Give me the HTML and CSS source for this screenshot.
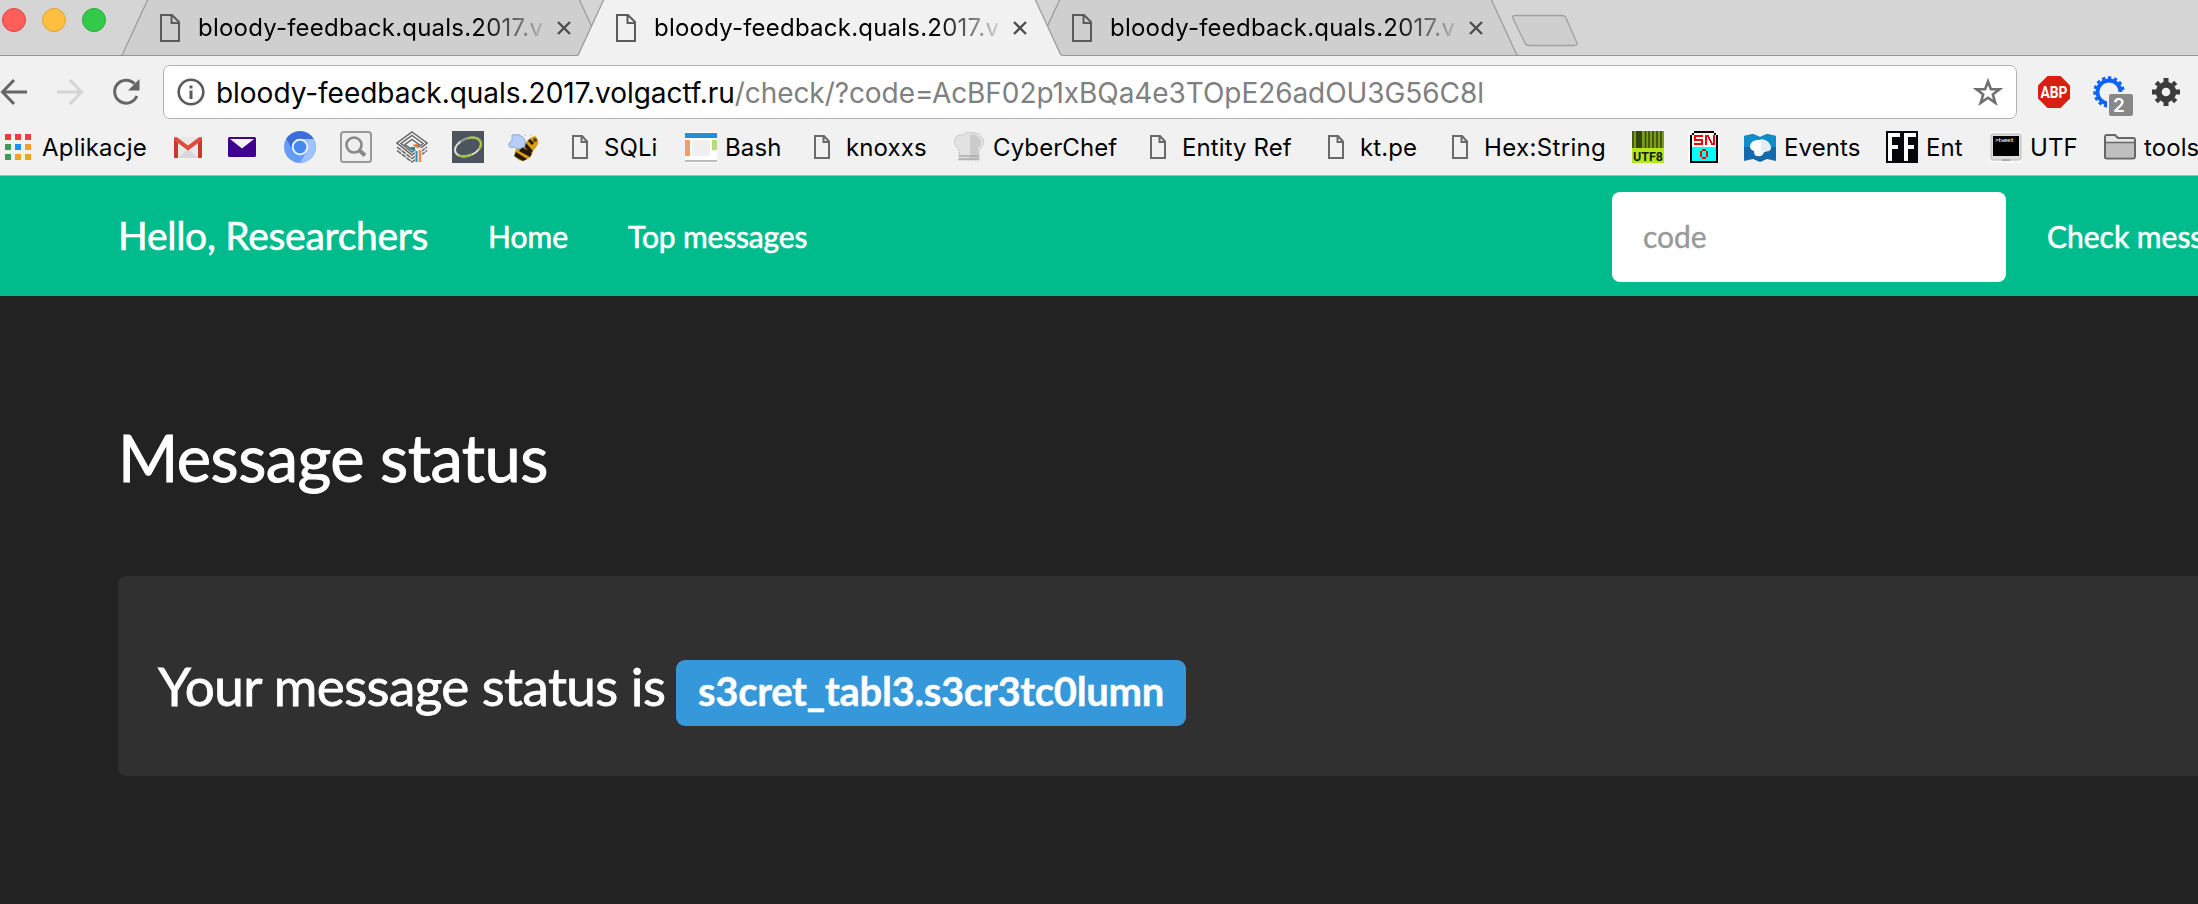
FILE: index.html
```
<!DOCTYPE html>
<html lang="pl">
<head>
<meta charset="utf-8">
<title>Message status</title>
<link rel="stylesheet" href="styles.css">
</head>
<body>
<svg class="defs" width="0" height="0">
  <symbol id="doc" viewBox="0 0 20 28"><path d="M1 1H12L19 8V27H1Z M11.500 1V9H19" fill="none" stroke="currentColor" stroke-width="2"/></symbol>
  <symbol id="doc-sm" viewBox="0 0 16 24"><path d="M1 1H10L15 6.500V23H1Z M9.500 1V7H15" fill="none" stroke="currentColor" stroke-width="2"/></symbol>
  <symbol id="close" viewBox="0 0 14 14"><path d="M1 1L13 13M13 1L1 13" fill="none" stroke="#4d4d4d" stroke-width="2.300"/></symbol>
  <symbol id="tab-shape" viewBox="0 0 486 56"><path d="M0 56Q2 55 3 52L25 4Q26 0 28 -1H457Q459 0 460 3L482 52Q483 55 486 56Z" fill="currentColor"/><path d="M0.500 55.500Q2 54 3 51L27 -1M458 -1L482 51Q483 54 485 55.500" fill="none" stroke="#999" stroke-width="1.200"/></symbol>
</svg>
<div class="browser">
  <header class="tabstrip">
    <div class="lights"><i class="red"></i><i class="yellow"></i><i class="green"></i></div>
    <div class="tab"><svg class="shape"><use href="#tab-shape"/></svg><svg class="fav"><use href="#doc"/></svg><span class="tab-title">bloody-feedback.quals.2017.v</span><svg class="x"><use href="#close"/></svg></div>
    <div class="tab active"><svg class="shape"><use href="#tab-shape"/></svg><svg class="fav"><use href="#doc"/></svg><span class="tab-title">bloody-feedback.quals.2017.v</span><svg class="x"><use href="#close"/></svg></div>
    <div class="tab"><svg class="shape"><use href="#tab-shape"/></svg><svg class="fav"><use href="#doc"/></svg><span class="tab-title">bloody-feedback.quals.2017.v</span><svg class="x"><use href="#close"/></svg></div>
    <svg class="newtab" viewBox="0 0 68 34"><path d="M4 1.500H51Q54 1.500 55 4L65.500 28Q67 31.500 63 31.500H18Q15 31.500 14 29L2 4.500Q1 1.500 4 1.500Z" fill="#cfcfcf" stroke="#a0a0a0" stroke-width="1.300"/></svg>
  </header>
  <div class="toolbar">
    <svg class="back" viewBox="0 0 28 28"><path d="M27 14H3M14 2L2.500 14L14 26" fill="none" stroke="#666" stroke-width="3"/></svg>
    <svg class="forward" viewBox="0 0 28 28"><path d="M1 14H25M14 2L25.500 14L14 26" fill="none" stroke="#d4d4d4" stroke-width="3"/></svg>
    <svg class="reload" viewBox="0 0 28 28"><path d="M22.500 5.800A11.500 11.500 0 1 0 24.800 18" fill="none" stroke="#666" stroke-width="3"/><path d="M27.500 1V12.500H16Z" fill="#666"/></svg>
    <div class="omnibox">
      <svg class="info" viewBox="0 0 28 28"><circle cx="14" cy="14" r="12.300" fill="none" stroke="#5a5a5a" stroke-width="2.600"/><path d="M12.500 7.500h3v3h-3zM12.500 12.500h3v8.500h-3z" fill="#5a5a5a"/></svg>
      <span class="url">bloody-feedback.quals.2017.volgactf.ru<span class="path">/check/?code=AcBF02p1xBQa4e3TOpE26adOU3G56C8l</span></span>
      <svg class="star" viewBox="0 0 30 30"><path d="M15 4.500L17.900 12.300H26.500L19.800 17.400L22.300 25.800L15 20.800L7.700 25.800L10.200 17.400L3.500 12.300H12.100Z" fill="none" stroke="#707070" stroke-width="2.600"/></svg>
    </div>
    <svg class="abp" viewBox="0 0 32 32"><path d="M9.500 0H22.500L32 9.500V22.500L22.500 32H9.500L0 22.500V9.500Z" fill="#d91f12"/><text x="16" y="21.500" text-anchor="middle" textLength="27" lengthAdjust="spacingAndGlyphs">ABP</text></svg>
    <div class="ext"><svg viewBox="0 0 32 32"><circle cx="16" cy="16" r="11.500" fill="none" stroke="#0d63f8" stroke-width="3.800"/><circle cx="16" cy="16" r="14" fill="none" stroke="#0d63f8" stroke-width="3.500" stroke-dasharray="3.300 2.564"/><path d="M14 16H32V32H14Z" fill="#f1f1f1"/></svg><b>2</b></div>
    <svg class="gear" viewBox="0 0 28 28"><circle cx="14" cy="14" r="7.300" fill="none" stroke="#3c3c3c" stroke-width="6"/><g stroke="#3c3c3c" stroke-width="5"><path d="M14 0V5M14 23V28M0 14H5M23 14H28"/><path d="M4.300 4.300L7 7M21 21L23.700 23.700M4.300 23.700L7 21M21 7L23.700 4.300" stroke-width="4.500"/></g></svg>
  </div>
  <nav class="bookmarks">
    <a class="apps"><svg width="26" height="26" viewBox="0 0 26 26"><path d="M0 0h6v6H0zM10 0h6v6h-6zM20 0h6v6h-6z" fill="#f43b3b"/><path d="M0 10h6v6H0zM0 20h6v6H0z" fill="#3a9e59"/><path d="M10 10h6v6h-6z" fill="#2390f5"/><path d="M20 10h6v6h-6zM10 20h6v6h-6zM20 20h6v6h-6z" fill="#f2a027"/></svg><span>Aplikacje</span></a>
    <a><svg width="28" height="32" viewBox="0 0 28 32"><path d="M1 6H27V27H1Z" fill="#e8e8e8"/><path d="M4 27L14 18L24 27Z" fill="#d7d7d7"/><path d="M0 7L4 8V27H1Q0 27 0 26ZM28 7L24 8V27H27Q28 27 28 26Z" fill="#c8382b"/><path d="M0 7Q1 5 4 7L14 14.500L24 7Q27 5 28 7L27 10L14 19.500L1 10Z" fill="#e04b3c"/></svg></a>
    <a><svg width="28" height="32" viewBox="0 0 28 32"><rect y="6" width="28" height="20" rx="1.500" fill="#400090"/><path d="M2 8H26L14 17.500Z" fill="#f4f1f8"/></svg></a>
    <a><svg width="32" height="32" viewBox="0 0 32 32"><circle cx="16" cy="16" r="16" fill="#659cf6"/><path d="M2.300 7.800A16 16 0 0 1 29.700 8H16A8 8 0 0 0 9 20Z" fill="#3c6edb"/><path d="M29.700 8A16 16 0 0 1 16 32L23 20A8 8 0 0 0 16 8Z" fill="#a0c3ff"/><circle cx="16" cy="16" r="7.300" fill="#4688f1" stroke="#f4f8ff" stroke-width="1.800"/></svg></a>
    <a><svg width="32" height="32" viewBox="0 0 32 32"><rect x="1" y="1" width="30" height="30" rx="2.500" fill="#efefef" stroke="#999" stroke-width="2"/><circle cx="14" cy="14" r="7.500" fill="#eee" stroke="#888" stroke-width="2.600"/><path d="M19 19L25 24.500" stroke="#888" stroke-width="4"/></svg></a>
    <a><svg width="32" height="32" viewBox="0 0 32 32"><g fill="none" stroke="#666" stroke-width="1.500"><path d="M16 1L31 12L16 24L1 12Z"/><path d="M16 4.500L27 12.500L16 21L5 12.500Z"/><path d="M16 8.500L23 13.500L16 18.500L9 13.500Z" fill="#f1f1f1"/><path d="M1 16L16 27.500L31 16M1 19.500L16 31L31 19.500" stroke-dasharray="5 1"/></g><path d="M18.500 16L19 32H26V17Z" fill="#f1f1f1"/><path d="M20.500 20V31" stroke="#2d90b5" stroke-width="2"/><path d="M24 19V31" stroke="#f6884b" stroke-width="2.500"/><path d="M16 14L21 13L22 18L20 16Z" fill="#f47b20"/><path d="M14 16H19V18L20 20L17 19Z" fill="#2487ab"/></svg></a>
    <a><svg width="32" height="32" viewBox="0 0 32 32"><path d="M0 0H32V32H0Z" fill="#4e545e"/><g transform="rotate(-22 16 16)" fill="none" stroke-width="2"><ellipse cx="16" cy="16" rx="13.500" ry="8.500" stroke="#dfe3df"/><path d="M18 7.600Q29.500 9 29.500 16Q29.500 20 25 22.500M17 24.500Q8 24.500 4 20" stroke="#a4c43b"/><path d="M11 8.200Q15 7.200 19 7.700" stroke="#878f86"/></g></svg></a>
    <a><svg width="32" height="32" viewBox="0 0 32 32"><path d="M7 20Q11 15 17 13Q20 7 27 5Q31 8 30 13Q28 17 25 20Q24 28 14 30Q5 28 7 20Z" fill="#dc9b13"/><path d="M14 16L24 22L22 26L11 20ZM8 21L19 28L15 30L6 25ZM18 12L25 20L22 22L16 15ZM22 8L26 12L24 14L20 10Z" fill="#211a0d"/><path d="M4 4Q13 2 17 9V15Q10 20 6 16Q0 18 1 12L4 10Z" fill="#b8cff8" stroke="#8aa7dd"/><circle cx="27" cy="9" r="2" fill="#5e430a"/><path d="M17 3V5M23 3V5" stroke="#ddd" stroke-width="2"/></svg></a>
    <a class="page"><svg width="16" height="24"><use href="#doc-sm"/></svg><span>SQLi</span></a>
    <a><svg width="32" height="32" viewBox="0 0 32 32"><path d="M0 1H32V32H0Z" fill="#fff"/><path d="M0 2H32V7H0Z" fill="#218fdc"/><path d="M0 9H5V25H0Z" fill="#f59c6c"/><path d="M7 9H25V25H7Z" fill="#f0f0f0"/><path d="M27 9H32V19H27Z" fill="#b5dd7b"/><path d="M0 29H32V31H0Z" fill="#bbb"/></svg><span>Bash</span></a>
    <a class="page"><svg width="16" height="24"><use href="#doc-sm"/></svg><span>knoxxs</span></a>
    <a><svg width="32" height="32" viewBox="0 0 32 32"><path d="M6 29V18Q0 14 2 8Q4 3 10 4Q14 0 19 2Q25 1 28 6Q33 9 29 15Q28 18 26 18V29Z" fill="#e2e2e2" stroke="#b9b9b9" stroke-dasharray="2 1"/><path d="M17 4Q24 3 27 8Q30 13 25 17V27H17Z" fill="#cbcbcb"/><path d="M6 25H26M6 28H26" stroke="#aaa" stroke-width="1.500"/></svg><span>CyberChef</span></a>
    <a class="page"><svg width="16" height="24"><use href="#doc-sm"/></svg><span>Entity Ref</span></a>
    <a class="page"><svg width="16" height="24"><use href="#doc-sm"/></svg><span>kt.pe</span></a>
    <a class="page"><svg width="16" height="24"><use href="#doc-sm"/></svg><span class="hex">Hex:String</span></a>
    <a><svg width="32" height="32" viewBox="0 0 32 32"><path d="M0 0H32V32H0Z" fill="#b2e61d"/><path d="M0 0H32V17H0Z" fill="#799e17"/><path d="M1 0V17M13.500 0V17M17 0V17M21 0V17M25 0V17M29 0V17" stroke="#34440c" stroke-width="1.500"/><path d="M4 0H10V17H4Z" fill="#34440c"/><text class="utf8" x="16" y="30" text-anchor="middle" textLength="30" lengthAdjust="spacingAndGlyphs">UTF8</text></svg></a>
    <a><svg width="32" height="32" viewBox="0 0 32 32" shape-rendering="crispEdges"><path d="M0 0H32V32H0Z" fill="#fff"/><path d="M6 0H26V2H28V4H30V32H2V4H4V2H6Z" fill="#000"/><path d="M6 2H26V4H28V16H4V4H6Z" fill="#fff"/><path d="M4 16H28V30H4Z" fill="#0ff"/><path d="M15 5H7V9H14V13H6M18 14V4M18 5H20L24 13H26V4" fill="none" stroke="#f00" stroke-width="2"/><path d="M14 18H18V20H20V26H18V28H14V26H12V20H14ZM14 20V26H18V20Z" fill="#f00" fill-rule="evenodd"/></svg></a>
    <a><svg width="32" height="32" viewBox="0 0 32 32"><path d="M0 5L9 3L16 6L23 3L32 5V30L23 28L16 31L9 28L0 30Z" fill="#1269ac"/><path d="M0 5L9 3L16 6L23 3L32 5V16H0Z" fill="#118dc8"/><path d="M6 15Q7 9 14 9Q21 8 25 12Q29 17 25 20L20 21Q19 26 13 25Q10 25 10 20Q6 19 6 15Z" fill="#fff"/><path d="M17 8Q24 9 26 14Q27 18 24 20H19L17 23Z" fill="#e4edf3"/></svg><span>Events</span></a>
    <a><svg width="32" height="32" viewBox="0 0 32 32"><path d="M0 0H32V32H0Z" fill="#05070a"/><path d="M2 2H14V6H6V14H12V18H6V30H2ZM18 2H30V6H22V14H28V18H22V30H18Z" fill="#fff"/></svg><span>Ent</span></a>
    <a><svg width="32" height="32" viewBox="0 0 32 32"><path d="M0 0H32V32H0Z" fill="#f7f7f7"/><rect x="1" y="3" width="30" height="26" rx="2" fill="#ddd" stroke="#bbb"/><path d="M3 5H29V25H3Z" fill="#000"/><text class="prompt" x="5" y="11" textLength="19">&gt;tweet</text><path d="M12 28H20V30H12Z" fill="#aaa"/></svg><span>UTF</span></a>
    <a class="folder"><svg width="32" height="26" viewBox="0 0 32 26"><path d="M1 24V3Q1 1 3 1H11L14 4H29Q31 4 31 6V22Q31 24.500 29 24.500H3Q1 24.500 1 23Z" fill="#e6e6e6" stroke="#666" stroke-width="2"/><path d="M2 9H30V23H2Z" fill="#bfbfbf"/><path d="M1 8.500H31" stroke="#666" stroke-width="1.500"/></svg><span>tools</span></a>
  </nav>
</div>
<div class="navbar">
  <a class="brand">Hello, Researchers</a>
  <a class="link home">Home</a>
  <a class="link top">Top messages</a>
  <form class="check"><input type="text" placeholder="code"><a class="link submit">Check mess</a></form>
</div>
<main>
  <h2>Message status</h2>
  <section class="well"><h3><span class="status-text">Your message status is</span><span class="label">s3cret_tabl3.s3cr3tc0lumn</span></h3></section>
</main>
</body>
</html>
```
FILE: styles.css
```
* { box-sizing: border-box; }
body { margin: 0; width: 2198px; height: 904px; overflow: hidden; background: #222; color: #fff; font-family: Lato, sans-serif; }
svg { display: block; flex: none; }
.defs { position: absolute; }
.browser { height: 176px; background: #f1f1f1; border-bottom: 1px solid #b3b3b3; color: #000; font-family: Inter, sans-serif; }

.tabstrip { display: flex; height: 56px; background: #d5d5d5; box-shadow: inset 0 -1px #969696; }
.lights { display: flex; gap: 16px; width: 121px; padding: 8px 0 0 2px; flex: none; }
.lights i { width: 24px; height: 24px; border-radius: 50%; }
.red { background: #ff5f58; border: 1px solid #e0453f; }
.yellow { background: #ffbf40; border: 1px solid #dfa034; }
.green { background: #34ca49; border: 1px solid #25ac36; }
.tab { position: relative; display: flex; width: 486px; height: 56px; margin-right: -30px; padding: 14px 0 0 39px; flex: none; color: #cfcfcf; }
.tab.active { z-index: 1; color: #f1f1f1; }
.shape { position: absolute; left: 0; top: 0; width: 486px; height: 56px; }
.tab:not(.active) .shape { clip-path: inset(0 0 1px 0); }
.fav { position: relative; width: 20px; height: 28px; color: #5b5b5b; }
.tab-title { position: relative; width: 352px; height: 34px; margin: -3px 0 0 18px; white-space: nowrap; font-size: 24px; line-height: 34px; letter-spacing: 0.22px; color: #000; -webkit-mask-image: linear-gradient(90deg, #000 284px, transparent 354px); mask-image: linear-gradient(90deg, #000 284px, transparent 354px); }
.x { position: relative; width: 14px; height: 14px; margin: 7px 0 0 7px; }
.newtab { width: 68px; height: 34px; margin: 14px 0 0 22px; }

.toolbar { display: flex; align-items: flex-start; height: 69px; padding-top: 9px; }
.back { width: 28px; height: 28px; margin: 13px 28px 0 0; }
.forward { width: 28px; height: 28px; margin: 13px 28px 0 0; }
.reload { width: 28px; height: 28px; margin: 13px 23px 0 0; }
.omnibox { display: flex; align-items: center; width: 1854px; height: 54px; padding: 0 13px; background: #fff; border: 1px solid #b4b4b4; border-radius: 7px; }
.info { width: 28px; height: 28px; }
.url { flex: 1; margin-left: 11px; padding-top: 2px; font-size: 28px; line-height: 40px; letter-spacing: -0.03px; white-space: nowrap; }
.path { color: #808080; letter-spacing: -0.07px; }
.star { width: 30px; height: 30px; }
.abp { width: 32px; height: 32px; margin: 11px 0 0 21px; }
.abp text { font: bold 16px Roboto, sans-serif; fill: #fff; }
.ext { position: relative; width: 32px; height: 32px; margin: 11px 0 0 23px; }
.ext b { position: absolute; left: 16px; top: 18px; width: 24px; height: 22px; background: #888; border-radius: 2px; color: #fff; font: 600 19px/23px Inter, sans-serif; text-align: center; padding-right: 4px; }
.gear { width: 28px; height: 28px; margin: 13px 0 0 27px; }

.bookmarks { display: grid; grid-template-columns: 169px 54px 56px 56px 56px 56px 56px 64px 113px 129px 139px 197px 178px 124px 180px 56px 56px 142px 104px 114px 120px; height: 44px; padding-left: 5px; }
.bookmarks a { display: flex; align-items: center; gap: 8px; font-size: 24px; letter-spacing: 0.1px; white-space: nowrap; }
.bookmarks .apps { gap: 11px; letter-spacing: 0.2px; }
.bookmarks .page { gap: 16px; color: #6a6a6a; }
.bookmarks span { color: #000; }
.bookmarks .hex { letter-spacing: 0.35px; }
.utf8 { font: bold 12px Roboto, sans-serif; letter-spacing: 0; fill: #15200a; }
.prompt { font: bold 6px "Liberation Mono", monospace; letter-spacing: 0; fill: #ddd; }

.navbar { display: flex; align-items: center; height: 120px; padding-left: 118px; background: #00bc8c; white-space: nowrap; }
.navbar > * { flex: none; }
.brand, .link, h2, .status-text { -webkit-text-stroke: 0.6px currentColor; }
.brand { width: 370px; margin-top: -2px; font-size: 39px; letter-spacing: -0.27px; }
.link { font-size: 30px; }
.home { width: 140px; }
.top { width: 984px; letter-spacing: -0.15px; }
.check { display: flex; align-items: center; }
.check input { width: 394px; height: 90px; margin: 2px 41px 0 0; padding: 0 31px 2px; border: 0; border-radius: 8px; background: #fff; font: 30px Lato, sans-serif; }
.check input::placeholder { color: #999; opacity: 1; -webkit-text-stroke: 0.4px #999; }

main { padding: 121px 0 0 118px; }
h2, h3 { margin: 0; font-weight: 400; white-space: nowrap; }
h2 { font-size: 65px; line-height: 80px; letter-spacing: -0.55px; -webkit-text-stroke-width: 0.9px; }
.well { height: 200px; margin-top: 79px; padding: 70px 0 0 40px; background: #303030; border-radius: 8px 0 0 8px; }
h3 { display: flex; align-items: center; font-size: 53px; line-height: 70px; }
.status-text { width: 518px; letter-spacing: -0.57px; -webkit-text-stroke-width: 0.8px; }
.label { width: 510px; height: 66px; margin-top: 14px; border-radius: 9px; background: #3498db; font-size: 40px; font-weight: 700; line-height: 63px; letter-spacing: -0.3px; text-align: center; -webkit-text-stroke: 0.4px currentColor; }
```
